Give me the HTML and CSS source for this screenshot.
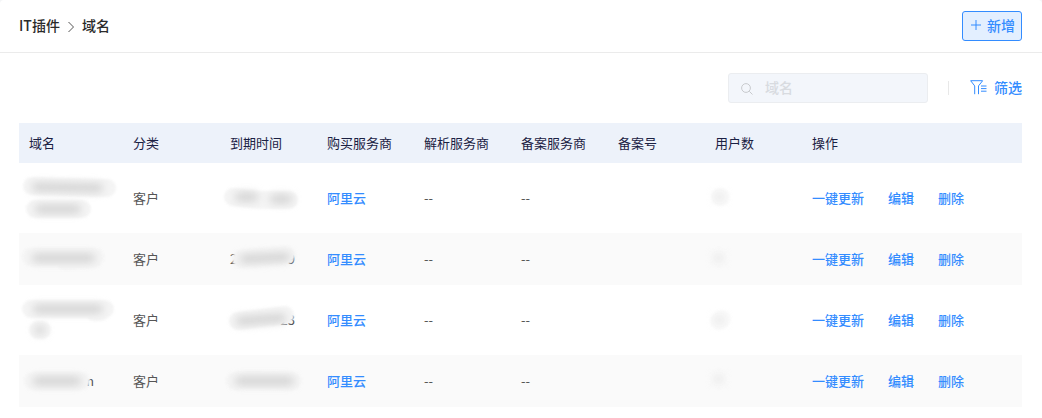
FILE: index.html
```html
<!DOCTYPE html>
<html lang="zh-CN">
<head>
<meta charset="utf-8">
<meta name="viewport" content="width=device-width, initial-scale=1">
<title>域名</title>
<link rel="stylesheet" href="styles.css">
</head>
<body>
<main class="panel">
  <header class="topbar">
    <nav class="crumbs" aria-label="导航">
      <span>IT插件</span>
      <svg class="crumb-arrow" viewBox="0 0 8 12" aria-hidden="true"><path d="M1.5 1 6.5 6 1.5 11"/></svg>
      <span>域名</span>
    </nav>
    <button class="add" type="button">
      <svg class="add-icon" viewBox="0 0 10 10" aria-hidden="true"><path d="M5 0v10M0 5h10"/></svg>
      新增
    </button>
  </header>
  <div class="content">
    <div class="toolbar">
      <label class="search">
        <svg class="search-icon" viewBox="0 0 12 12" aria-hidden="true"><circle cx="5" cy="5" r="4.4"/><path d="m8.3 8.3 3.2 3.2"/></svg>
        <input class="search-input" type="text" placeholder="域名" aria-label="域名">
      </label>
      <span class="divider"></span>
      <button class="filter" type="button">
        <svg class="filter-icon" viewBox="0 0 17 15" aria-hidden="true"><path d="M.5.7h12.2M.8.9l3.9 5v8.3M12.5.9 8.5 5.9v8.3M11 6h5.5M11 8.6h5.5M11 11.2h5.5"/></svg>
        筛选
      </button>
    </div>
    <table class="table">
      <colgroup>
        <col class="col-name"><col class="col"><col class="col"><col class="col"><col class="col"><col class="col"><col class="col"><col class="col"><col class="col-actions">
      </colgroup>
      <thead>
        <tr><th>域名</th><th>分类</th><th>到期时间</th><th>购买服务商</th><th>解析服务商</th><th>备案服务商</th><th>备案号</th><th>用户数</th><th>操作</th></tr>
      </thead>
      <tbody>
        <tr class="tall">
          <td><svg class="smudge" aria-hidden="true"><path class="veil" d="M13 23 47 24 88 25M16 46H63"/><path class="shade" d="M17 24 80 25M20 46H58"/></svg></td>
          <td>客户</td>
          <td><svg class="smudge" aria-hidden="true"><path class="veil" d="M13 34 40 37 69 37"/><path class="shade" d="M19 34H34M54 36H68"/></svg></td>
          <td><a class="link" href="#">阿里云</a></td><td>--</td><td>--</td><td></td>
          <td><svg class="smudge faint" aria-hidden="true"><path class="veil" d="M15 34H16"/><path class="shade" d="M14 34H15"/></svg></td>
          <td><div class="actions"><a class="link" href="#">一键更新</a><a class="link" href="#">编辑</a><a class="link" href="#">删除</a></div></td>
        </tr>
        <tr>
          <td><svg class="smudge" aria-hidden="true"><path class="veil" d="M12 24H76M46 28 75 26"/><path class="shade" d="M17 25H72"/></svg></td>
          <td>客户</td>
          <td><span class="date"><span>2</span><span>9</span></span><svg class="smudge" aria-hidden="true"><path class="veil" d="M21 26 66 22"/><path class="shade" d="M24 26 66 24"/></svg></td>
          <td><a class="link" href="#">阿里云</a></td><td>--</td><td>--</td><td></td>
          <td><svg class="smudge faint" aria-hidden="true"><path class="veil" d="M13 24H15"/><path class="shade" d="M13 25H14"/></svg></td>
          <td><div class="actions"><a class="link" href="#">一键更新</a><a class="link" href="#">编辑</a><a class="link" href="#">删除</a></div></td>
        </tr>
        <tr class="tall">
          <td><svg class="smudge" aria-hidden="true"><path class="veil" d="M12 24H86M75 27H82M19 45H23"/><path class="shade" d="M18 24H80M20 45H22"/></svg></td>
          <td>客户</td>
          <td><span class="date"><span></span><span>23</span></span><svg class="smudge" aria-hidden="true"><path class="veil" d="M18 36 65 30"/><path class="shade" d="M20 36 62 33"/></svg></td>
          <td><a class="link" href="#">阿里云</a></td><td>--</td><td>--</td><td></td>
          <td><svg class="smudge faint" aria-hidden="true"><path class="veil" d="M14 36 17 34"/><path class="shade" d="M14 35H15"/></svg></td>
          <td><div class="actions"><a class="link" href="#">一键更新</a><a class="link" href="#">编辑</a><a class="link" href="#">删除</a></div></td>
        </tr>
        <tr>
          <td><span class="date"><span></span><span>m</span></span><svg class="smudge" aria-hidden="true"><path class="veil" d="M14 26H62"/><path class="shade" d="M18 26H58"/></svg></td>
          <td>客户</td>
          <td><svg class="smudge" aria-hidden="true"><path class="veil" d="M15 26 30 25 72 26"/><path class="shade" d="M19 26H70"/></svg></td>
          <td><a class="link" href="#">阿里云</a></td><td>--</td><td>--</td><td></td>
          <td><svg class="smudge faint" aria-hidden="true"><path class="veil" d="M13 24H15"/><path class="shade" d="M13 24H14"/></svg></td>
          <td><div class="actions"><a class="link" href="#">一键更新</a><a class="link" href="#">编辑</a><a class="link" href="#">删除</a></div></td>
        </tr>
      </tbody>
    </table>
  </div>
</main>
</body>
</html>
```
FILE: styles.css
```css
* { box-sizing: border-box; }
body {
  margin: 0;
  background: #f4f5f7;
  color: #555;
  font: 13px/20px "Noto Sans CJK SC", sans-serif;
}
button, input { font: inherit; }
svg { fill: none; stroke: currentColor; }
.panel {
  min-height: 100vh;
  background: #fff;
  border-radius: 4px 4px 0 0;
}
.topbar {
  display: flex;
  align-items: center;
  justify-content: space-between;
  padding: 11px 20px 11px 19px;
  border-bottom: 1px solid #ebebeb;
}
.crumbs {
  display: flex;
  align-items: center;
  gap: 7px;
  padding-bottom: 2px;
  color: #2b2b2b;
  font-size: 14px;
  font-weight: 500;
}
.crumb-arrow { width: 8px; height: 12px; margin-top: 4px; color: #555; }
.add {
  display: flex;
  align-items: center;
  gap: 6px;
  height: 30px;
  padding: 0 6px 2px 8px;
  border: 1px solid #338cff;
  border-radius: 3px;
  background: #e3efff;
  color: #338cff;
  font-size: 14px;
  font-weight: 500;
}
.add-icon { width: 10px; height: 10px; }
.content { padding: 20px 20px 10px 19px; }
.toolbar {
  display: flex;
  align-items: center;
  justify-content: flex-end;
  margin-bottom: 20px;
}
.search {
  display: flex;
  align-items: center;
  gap: 12px;
  width: 200px;
  height: 30px;
  padding: 0 12px;
  border: 1px solid #ebedf0;
  border-radius: 3px;
  background: #f3f6fb;
}
.search-icon { flex: none; width: 12px; height: 12px; margin-top: 2px; color: #c8cacd; }
.search-input {
  flex: 1;
  min-width: 0;
  padding: 0 0 2px;
  border: 0;
  outline: 0;
  background: none;
  color: #333;
  font-size: 14px;
  font-weight: 500;
}
.search-input::placeholder { color: #d8dbe0; opacity: 1; }
.divider { width: 1px; height: 14px; margin: 0 21px 0 20px; background: #e8e8e8; }
.filter {
  display: flex;
  align-items: center;
  gap: 7px;
  padding: 0 0 2px;
  border: 0;
  background: none;
  color: #338cff;
  font-size: 14px;
  font-weight: 500;
}
.filter-icon { width: 17px; height: 15px; }
.table { width: 100%; border-collapse: collapse; table-layout: fixed; }
.col-name { width: 104px; }
.col { width: 97px; }
th, td { padding: 0 10px; text-align: left; }
th {
  height: 40px;
  background: #edf2fa;
  color: #1b2143;
  font-weight: 400;
  white-space: nowrap;
}
td { position: relative; height: 52px; }
.tall td { height: 70px; }
tbody tr:nth-child(even) { background: #fafafa; }
.link { color: #338cff; font-weight: 500; text-decoration: none; }
.actions { display: flex; gap: 24px; white-space: nowrap; }
.date { display: flex; justify-content: space-between; width: 65px; }
.smudge {
  position: absolute;
  inset: 0;
  width: 100%;
  height: 100%;
  stroke-linecap: round;
  stroke-linejoin: round;
}
.veil { stroke: #f5f5f5; stroke-width: 18px; filter: blur(1px); }
.shade { stroke: #d0d0d0; stroke-width: 8px; filter: blur(4px); }
.faint .veil { stroke: #fafafa; }
.faint .shade { stroke: #e4e4e4; }
```
